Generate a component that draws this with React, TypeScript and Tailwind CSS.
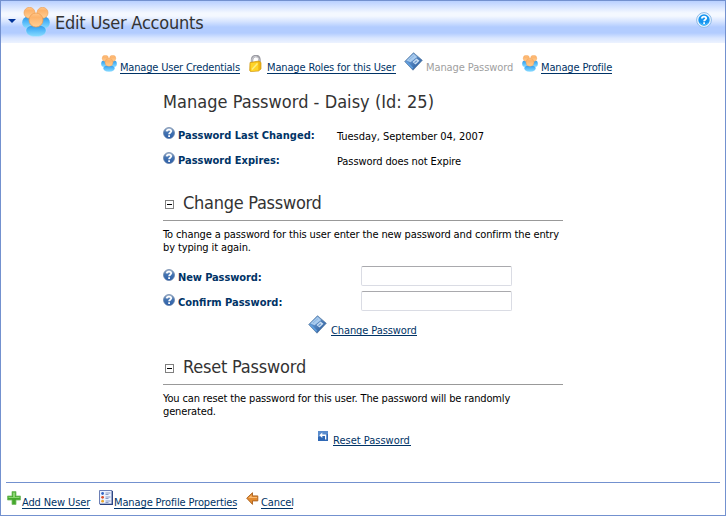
import type { ReactNode } from "react";

function Users({ className }: { className: string }) {
  return (
    <svg viewBox="0 0 28 30" className={className}>
      <defs>
        <linearGradient id="skin" x1="0" y1="0" x2="0" y2="1">
          <stop offset="0" stopColor="#ffc78a" />
          <stop offset="0.3" stopColor="#fdb36b" />
          <stop offset="1" stopColor="#ffcf95" />
        </linearGradient>
        <linearGradient id="shirt" x1="0" y1="0" x2="0" y2="1">
          <stop offset="0" stopColor="#2f97e6" />
          <stop offset="0.4" stopColor="#4db4f8" />
          <stop offset="1" stopColor="#8addff" />
        </linearGradient>
      </defs>
      <ellipse cx="5.200" cy="15.500" rx="5" ry="5.800" fill="url(#shirt)" />
      <ellipse cx="22.800" cy="15.500" rx="5" ry="5.800" fill="url(#shirt)" />
      <circle cx="7.500" cy="5.800" r="5.500" fill="url(#skin)" stroke="#ec9a4d" strokeWidth="0.6" />
      <circle cx="20.500" cy="5.800" r="5.500" fill="url(#skin)" stroke="#ec9a4d" strokeWidth="0.6" />
      <path d="M4 23.500c0-4 4-5.500 10-5.500s10 1.500 10 5.500c0 4-4 6-10 6S4 27.500 4 23.500z" fill="url(#shirt)" stroke="#c4e6ff" strokeWidth="0.4" />
      <circle cx="14" cy="13" r="7" fill="url(#skin)" stroke="#ec9a4d" strokeWidth="0.7" />
    </svg>
  );
}

function Disk({ className }: { className: string }) {
  return (
    <svg viewBox="0 0 19 19" className={className}>
      <defs>
        <linearGradient id="disk" x1="0" y1="0" x2="1" y2="1">
          <stop offset="0" stopColor="#7fb0e4" />
          <stop offset="1" stopColor="#215294" />
        </linearGradient>
      </defs>
      <path d="M9.500 .7L18.300 8.300 9 18.200.7 9.500z" fill="url(#disk)" stroke="#55799f" strokeWidth="0.7" strokeLinejoin="round" />
      <path d="M9.600 1.800L13.200 5 6.500 10.300 2.500 8.400z" fill="#a9cbee" />
      <path d="M5 8l5-4.300" stroke="#8ab5e2" strokeWidth="1" />
      <path d="M8.500 10l4-3.500 3 2.200-4 3.800z" fill="#c9def4" />
      <path d="M10.500 10.700l2.300-2" stroke="#6f9ccf" strokeWidth="1.300" />
      <path d="M2.500 9.800l6.300 6.400" stroke="#5f9fe0" strokeWidth="1.600" />
    </svg>
  );
}

function Lock() {
  return (
    <svg viewBox="0 0 13 17" className="h-[17px] w-[13px]">
      <path d="M3 8V5c0-5 7-5.500 7.500-.5V7" fill="none" stroke="#9b9ba2" strokeWidth="2.400" />
      <path d="M3 8V5c0-4 6-5 7-.5V7" fill="none" stroke="#d9d9df" strokeWidth="0.9" />
      <path d="M1 7.500l9-1.500 2 1.500v6.500l-2.500 2-8 .5-.8-1z" fill="#f0b414" stroke="#cd960e" strokeWidth="0.7" />
      <path d="M1.500 8l7.800-.8v8.200l-7.500.8z" fill="#ffd428" />
      <path d="M3 14.500l5.500-6" stroke="#ffee80" strokeWidth="1.500" />
    </svg>
  );
}

function Hint() {
  return (
    <svg viewBox="0 0 12 12" className="h-3 w-3 shrink-0">
      <defs>
        <linearGradient id="hint" x1="0" y1="0" x2="0" y2="1">
          <stop offset="0" stopColor="#b5c1d2" />
          <stop offset="0.45" stopColor="#4474b2" />
          <stop offset="1" stopColor="#2a5da8" />
        </linearGradient>
      </defs>
      <circle cx="6" cy="6" r="5.500" fill="url(#hint)" stroke="#5f7ba3" strokeWidth="0.7" />
      <path d="M3.800 4.400C3.900 2 8.200 2 8.200 4.300 8.200 5.700 6.100 5.600 6.100 7.200" fill="none" stroke="#fff" strokeWidth="1.800" />
      <path d="M5.200 8.200h1.800v1.700H5.200z" fill="#fff" />
    </svg>
  );
}

function HelpButton() {
  return (
    <svg viewBox="0 0 16 16" className="h-4 w-4">
      <circle cx="8" cy="8" r="7.400" fill="#eef7ff" stroke="#86b4e4" strokeWidth="0.9" />
      <circle cx="8" cy="8" r="5.700" fill="#1694ef" />
      <path d="M3.500 9.500c2 3.500 7 3.500 9 0-1 5-8 5-9 0z" fill="#59c5ff" />
      <path d="M5.900 6.400C5.900 3.900 10.200 4 10.200 6.300 10.200 7.700 8.100 7.600 8.100 9.200" fill="none" stroke="#fff" strokeWidth="1.800" />
      <path d="M7.200 10.200H9v1.700H7.200z" fill="#fff" />
    </svg>
  );
}

function Minus() {
  return (
    <svg viewBox="0 0 9 9" className="h-[9px] w-[9px]" shapeRendering="crispEdges">
      <rect x="0.5" y="0.5" width="8" height="8" fill="#fff" stroke="#808080" />
      <path d="M2 4h5v1H2z" fill="#000" />
    </svg>
  );
}

function ResetIcon() {
  return (
    <svg viewBox="0 0 10 10" className="h-[10px] w-[10px]">
      <path d="M0 0h10v10H0z" fill="#2f68b5" />
      <path d="M0 0h10v3L0 6z" fill="#5a8ccd" />
      <path d="M1.300 4.300L4.300 1.600v1.900h4v5H7V5H4.300v2z" fill="#fff" />
    </svg>
  );
}

function Plus() {
  return (
    <svg viewBox="0 0 14 14" className="h-[14px] w-[14px]">
      <path d="M5 .5h4V5h4.500v4H9v4.500H5V9H.5V5H5z" fill="#45a82c" stroke="#7abd68" strokeWidth="0.8" />
      <path d="M6 1.500h2V6h4.500v1H1.500V6H6z" fill="#8ad66f" />
    </svg>
  );
}

function ListIcon() {
  return (
    <svg viewBox="0 0 14 15" className="h-[15px] w-[14px]">
      <path d="M.5.5h12.500v13.500H.5z" fill="#edf3ff" stroke="#6d7fb5" />
      <path d="M13.400 1v13.500H1" fill="none" stroke="#29437f" strokeWidth="1.100" />
      <circle cx="3.600" cy="3.500" r="1.400" fill="#3767c4" />
      <circle cx="3.600" cy="7.300" r="1.400" fill="#d84a28" />
      <circle cx="3.600" cy="11.200" r="1.400" fill="#eba72e" />
      <path d="M6.500 3h5M6.500 4.500h3M6.500 7h5M6.500 8.500h3M6.500 11h5M6.500 12.500h3" stroke="#6f83b8" strokeWidth="0.8" />
    </svg>
  );
}

function BackArrow() {
  return (
    <svg viewBox="0 0 13 13" className="h-[13px] w-[13px]">
      <path d="M.7 6.200L6.500.7v3.200h5.300v5H6.500v3.500z" fill="#e38b30" stroke="#a9601d" strokeWidth="0.9" />
      <path d="M2.300 6L5.600 2.900v2h5.400v1.200z" fill="#fbbb72" />
    </svg>
  );
}

function Link({ children, className = "h-[13px]" }: { children: ReactNode; className?: string }) {
  return (
    <a href="#" className={`block border-b border-[#003366] leading-[13px] whitespace-nowrap text-[#003366] ${className}`}>
      {children}
    </a>
  );
}

function Section({ title, tracking }: { title: string; tracking: string }) {
  return (
    <div className="flex h-[30px] items-start border-b border-[#999999]">
      <div className="mt-[9px] ml-[2px]"><Minus /></div>
      <h2 className={`ml-[9px] text-[18px] leading-[24px] whitespace-nowrap text-[#333333] ${tracking}`}>{title}</h2>
    </div>
  );
}

function Label({ children, className = "" }: { children: ReactNode; className?: string }) {
  return (
    <div className="flex items-start gap-[3px]">
      <Hint />
      <span className={`mt-[2px] font-bold leading-[13px] whitespace-nowrap text-[#003366] ${className}`}>{children}</span>
    </div>
  );
}

const field = "block h-[20px] w-[151px] rounded-[2px] border border-[#dadce4] border-t-[#a9a9ad] bg-white px-1 outline-none";

export default function App() {
  return (
    <div className="flex h-[516px] w-[726px] flex-col overflow-hidden border border-[#7391cf] bg-white font-['DejaVu_Sans_Condensed','DejaVu_Sans',sans-serif] text-[11px] text-black [font-stretch:condensed]">
      <header className="flex h-[42px] shrink-0 items-start bg-[linear-gradient(180deg,#b9d0ff_0px,#d2e1ff_5px,#f4f8ff_12px,#f4f8ff_15px,#d3e2ff_21px,#b2ccff_26px,#b2ccff_32px,#d8e5ff_37px,#edf3ff_42px)]">
        <svg viewBox="0 0 8 4" className="mt-[18px] ml-[7px] h-[4px] w-[8px]">
          <path d="M0 0h8L4 4z" fill="#003399" />
        </svg>
        <Users className="mt-[6px] ml-[6px] h-[30px] w-[28px]" />
        <h1 className="mt-[10px] ml-[5px] text-[18px] leading-[24px] tracking-[-0.22px] whitespace-nowrap text-[#333333]">Edit User Accounts</h1>
        <div className="mt-[11px] mr-[13px] ml-auto"><HelpButton /></div>
      </header>

      <nav className="flex h-[47px] shrink-0 items-start pl-[100px]">
        <Users className="mt-[12px] h-[17px] w-[16px]" />
        <Link className="mt-[18px] ml-[3px] h-[13px] w-[120px] tracking-[-0.19px]">Manage User Credentials</Link>
        <div className="mt-[12px] ml-[9px]"><Lock /></div>
        <Link className="mt-[18px] ml-[5px] h-[13px] w-[129px] tracking-[-0.15px]">Manage Roles for this User</Link>
        <Disk className="mt-[9px] ml-[8px] h-[19px] w-[19px]" />
        <span className="mt-[18px] ml-[3px] w-[87px] leading-[13px] tracking-[-0.1px] whitespace-nowrap text-[#a0a0a0]">Manage Password</span>
        <Users className="mt-[12px] ml-[9px] h-[17px] w-[16px]" />
        <Link className="mt-[18px] ml-[3px] h-[13px] w-[71px] tracking-[-0.15px]">Manage Profile</Link>
      </nav>

      <main className="ml-[162px] h-[392px] w-[400px] shrink-0">
        <h2 className="h-[37px] text-[18px] leading-[24px] tracking-[0.03px] whitespace-nowrap text-[#333333]">Manage Password - Daisy (Id: 25)</h2>
        <div className="grid grid-cols-[174px_1fr] grid-rows-[25px_39px]">
          <Label>Password Last Changed:</Label>
          <span className="mt-[3px] leading-[13px] tracking-[-0.05px] whitespace-nowrap">Tuesday, September 04, 2007</span>
          <Label>Password Expires:</Label>
          <span className="mt-[3px] leading-[13px] tracking-[-0.1px] whitespace-nowrap">Password does not Expire</span>
        </div>
        <Section title="Change Password" tracking="tracking-[-0.27px]" />
        <p className="mt-[7px] h-[41px] leading-[13px] tracking-[-0.12px] whitespace-nowrap">
          To change a password for this user enter the new password and confirm the entry
          <br />
          by typing it again.
        </p>
        <div className="grid grid-cols-[198px_1fr] grid-rows-[25px_25px]">
          <Label className="tracking-[-0.1px]">New Password:</Label>
          <input type="password" className={`${field} -mt-[3px]`} />
          <Label>Confirm Password:</Label>
          <input type="password" className={`${field} -mt-[3px]`} />
        </div>
        <div className="flex h-[36px] items-start pl-[145px]">
          <Disk className="-mt-[4px] h-[19px] w-[19px]" />
          <Link className="mt-[5px] ml-[4px] h-[12px] w-[86px] tracking-[-0.1px]">Change Password</Link>
        </div>
        <Section title="Reset Password" tracking="tracking-[-0.2px]" />
        <p className="mt-[7px] h-[39px] leading-[13px] tracking-[-0.14px] whitespace-nowrap">
          You can reset the password for this user. The password will be randomly
          <br />
          generated.
        </p>
        <div className="flex items-start pl-[155px]">
          <div><ResetIcon /></div>
          <Link className="mt-[3px] ml-[5px] h-[12px] w-[78px]">Reset Password</Link>
        </div>
      </main>

      <footer className="mx-[5px] flex h-[33px] shrink-0 items-start border-t border-[#7391cf]">
        <div className="mt-[8px] ml-[1px]"><Plus /></div>
        <Link className="mt-[13px] ml-[1px] h-[13px] w-[68px] tracking-[-0.12px]">Add New User</Link>
        <div className="mt-[7px] ml-[9px]"><ListIcon /></div>
        <Link className="mt-[13px] ml-[1px] h-[13px] w-[123px] tracking-[-0.12px]">Manage Profile Properties</Link>
        <div className="mt-[9px] ml-[9px]"><BackArrow /></div>
        <Link className="mt-[13px] ml-[2px] h-[13px] w-[32px] tracking-[-0.1px]">Cancel</Link>
      </footer>
    </div>
  );
}
